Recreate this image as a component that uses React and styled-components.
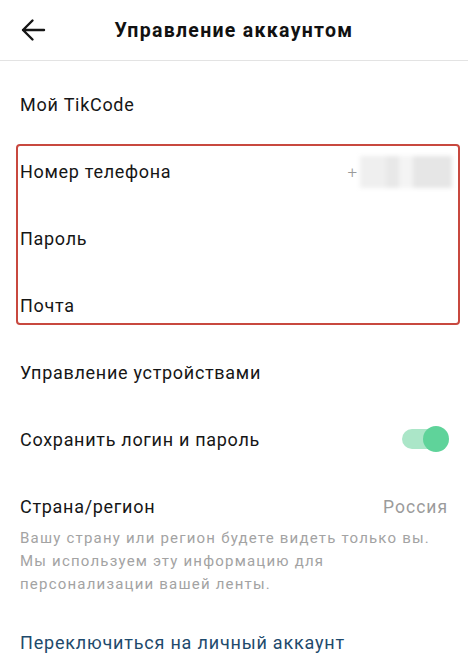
import React from "react";
import styled, { createGlobalStyle } from "styled-components";

const Global = createGlobalStyle`
  html, body { margin: 0; padding: 0; background: #fff; }
  body { font-family: Roboto, "Noto Sans", Arial, sans-serif; color: #161823; }
`;

const Page = styled.div`
  width: 468px;
  height: 667px;
  overflow: hidden;
  background: #fff;
`;

const Header = styled.header`
  height: 60px;
  border-bottom: 1px solid #e3e3e3;
  display: grid;
  grid-template-columns: 60px 1fr 60px;
  align-items: center;
`;

const BackButton = styled.button`
  border: 0;
  background: none;
  padding: 0 0 0 20px;
  display: flex;
  align-items: center;
  height: 100%;
`;

const Title = styled.h1`
  margin: 0;
  text-align: center;
  font-size: 19.5px;
  font-weight: 700;
  letter-spacing: 1.3px;
  color: #111;
`;

const List = styled.div`
  padding-top: 10px;
  display: flex;
  flex-direction: column;
`;

const Row = styled.div`
  height: ${(p) => p.$h || 67}px;
  padding: 0 20px;
  display: flex;
  align-items: center;
  justify-content: space-between;
`;

const Label = styled.span`
  font-size: 18px;
  letter-spacing: 0.7px;
  color: #161616;
`;

const Group = styled.div`
  position: relative;
`;

const Highlight = styled.div`
  position: absolute;
  left: 16px;
  right: 8px;
  top: 6px;
  height: 177px;
  border: 2px solid #c8483f;
  border-radius: 4px;
  pointer-events: none;
`;

const Masked = styled.span`
  display: flex;
  align-items: center;
  gap: 3px;
  margin-right: -4px;
`;

const Plus = styled.span`
  font-size: 17px;
  color: #9a9a9a;
  font-weight: 300;
`;

const Blur = styled.span`
  display: flex;
  width: 92px;
  height: 32px;
  filter: blur(2px);
`;

const BlurCell = styled.span`
  flex: ${(p) => p.$w};
  background: ${(p) => p.$c};
`;

const Toggle = styled.span`
  position: relative;
  width: 47px;
  height: 26px;
  margin-right: -1px;
  display: inline-block;
`;

const Track = styled.span`
  position: absolute;
  left: 0;
  top: 3px;
  width: 40px;
  height: 20px;
  border-radius: 10px;
  background: #abe6c8;
`;

const Thumb = styled.span`
  position: absolute;
  right: 0;
  top: 0;
  width: 26px;
  height: 26px;
  border-radius: 50%;
  background: #5fd39a;
`;

const CountryBlock = styled.div`
  padding: 23px 20px 0;
`;

const CountryHead = styled.div`
  display: flex;
  justify-content: space-between;
  align-items: center;
  line-height: 24px;
`;

const Value = styled.span`
  font-size: 17.5px;
  letter-spacing: 1px;
  color: #9b9b9b;
`;

const Note = styled.p`
  margin: 8px 0 0;
  font-size: 15px;
  letter-spacing: 1.2px;
  line-height: 23px;
  color: #a3a3a3;
  max-width: 420px;
`;

const Link = styled.a`
  display: block;
  margin: 35px 20px 0;
  font-size: 18px;
  letter-spacing: 0.8px;
  line-height: 24px;
  color: #1e4a6c;
  text-decoration: none;
`;

function BackArrow() {
  return (
    <svg width="26" height="24" viewBox="0 0 26 24" fill="none">
      <path
        d="M24 12H3M12.5 2.5L3 12l9.5 9.5"
        stroke="#161616"
        strokeWidth="2.4"
        strokeLinecap="round"
        strokeLinejoin="round"
      />
    </svg>
  );
}

export default function App() {
  return (
    <Page>
      <Global />
      <Header>
        <BackButton aria-label="Назад">
          <BackArrow />
        </BackButton>
        <Title>Управление аккаунтом</Title>
        <span />
      </Header>
      <List>
        <Row>
          <Label>Мой TikCode</Label>
        </Row>
        <Group>
          <Row>
            <Label>Номер телефона</Label>
            <Masked>
              <Plus>+</Plus>
              <Blur>
                <BlurCell $w={2} $c="#efefef" />
                <BlurCell $w={1} $c="#e8e8e8" />
                <BlurCell $w={1} $c="#f4f4f4" />
                <BlurCell $w={3} $c="#e6e6e6" />
              </Blur>
            </Masked>
          </Row>
          <Row>
            <Label>Пароль</Label>
          </Row>
          <Row>
            <Label>Почта</Label>
          </Row>
          <Highlight />
        </Group>
        <Row>
          <Label>Управление устройствами</Label>
        </Row>
        <Row $h={66}>
          <Label>Сохранить логин и пароль</Label>
          <Toggle>
            <Track />
            <Thumb />
          </Toggle>
        </Row>
        <CountryBlock>
          <CountryHead>
            <Label>Страна/регион</Label>
            <Value>Россия</Value>
          </CountryHead>
          <Note>
            Вашу страну или регион будете видеть только вы. Мы используем эту
            информацию для персонализации вашей ленты.
          </Note>
        </CountryBlock>
        <Link href="#">Переключиться на личный аккаунт</Link>
      </List>
    </Page>
  );
}
